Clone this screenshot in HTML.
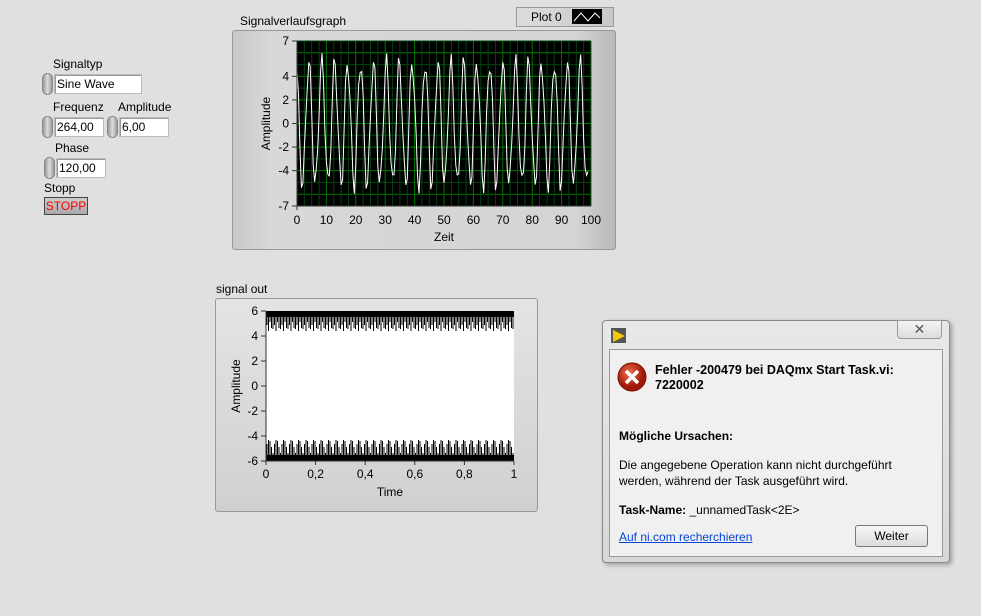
<!DOCTYPE html>
<html><head><meta charset="utf-8"><style>
body{margin:0;width:981px;height:616px;background:#e0e0e0;font-family:"Liberation Sans",sans-serif;font-size:12px;position:relative;overflow:hidden;color:#000}
.a{position:absolute}
.lbl{position:absolute;font-size:12px}
.inp{position:absolute;background:#fff;border:1px solid #bbb;box-shadow:inset 1px 1px 0 #999;height:20px;line-height:19px;padding-left:2px;font-size:12px;box-sizing:border-box}
.spin{position:absolute;width:11px;height:22px;border-radius:6px;background:linear-gradient(90deg,#999,#ddd,#999);border:1px solid #888;box-sizing:border-box}
.panel{position:absolute;background:linear-gradient(90deg,#c8c8c8,#d8d8d8 10%,#d4d4d4 90%,#b8b8b8);border:1px solid #999;border-radius:3px}
</style></head><body>
<div class="lbl" style="left:53px;top:57px">Signaltyp</div>
<div class="spin" style="left:42px;top:73px"></div>
<div class="inp" style="left:54px;top:74px;width:88px">Sine Wave</div>
<div class="lbl" style="left:53px;top:100px">Frequenz</div>
<div class="lbl" style="left:118px;top:100px">Amplitude</div>
<div class="spin" style="left:42px;top:116px"></div>
<div class="inp" style="left:54px;top:117px;width:50px">264,00</div>
<div class="spin" style="left:107px;top:116px"></div>
<div class="inp" style="left:119px;top:117px;width:50px">6,00</div>
<div class="lbl" style="left:55px;top:141px">Phase</div>
<div class="spin" style="left:44px;top:157px"></div>
<div class="inp" style="left:56px;top:158px;width:50px">120,00</div>
<div class="lbl" style="left:44px;top:181px">Stopp</div>
<div class="a" style="left:44px;top:197px;width:44px;height:18px;background:linear-gradient(#ccc,#aaa);border:1px solid #444;color:#f00;text-align:center;line-height:17px;box-sizing:border-box">STOPP</div>

<div class="lbl" style="left:240px;top:14px">Signalverlaufsgraph</div>
<div class="a" style="left:516px;top:7px;width:98px;height:20px;background:linear-gradient(90deg,#ddd,#c8c8c8);border:1px solid #999;box-sizing:border-box"></div>
<div class="lbl" style="left:531px;top:10px">Plot 0</div>
<svg class="a" style="left:572px;top:9px" width="30" height="15"><rect width="30" height="15" fill="#000"/><polyline points="2,12 9,4 16,12 23,4 28,9" fill="none" stroke="#fff"/></svg>
<div class="panel" style="left:232px;top:30px;width:382px;height:218px"></div>
<svg id="g1" class="a" style="left:232px;top:30px" width="382" height="218" font-family="Liberation Sans" font-size="12"></svg>

<div class="lbl" style="left:216px;top:282px">signal out</div>
<div class="panel" style="left:215px;top:298px;width:321px;height:212px;background:linear-gradient(#e4e4e4,#d0d0d0)"></div>
<svg id="g2" class="a" style="left:215px;top:298px" width="322" height="212" font-family="Liberation Sans" font-size="12"></svg>

<div class="a" style="left:602px;top:320px;width:348px;height:243px;background:linear-gradient(#e8e8e8,#d8d8d8);border:1px solid #888;border-radius:4px;box-sizing:border-box;box-shadow:2px 2px 5px rgba(0,0,0,.3)"></div>
<div class="a" style="left:611px;top:328px;width:15px;height:15px;background:#555"></div>
<svg class="a" style="left:612px;top:329px" width="14" height="14"><polygon points="1,1 13,7 1,13" fill="#f5c800"/></svg>
<div class="a" style="left:897px;top:320px;width:45px;height:19px;border:1px solid #999;border-radius:0 0 4px 4px;background:linear-gradient(#f4f4f4,#ddd);box-sizing:border-box;text-align:center;color:#555;font-size:14px;line-height:17px">✕</div>
<div class="a" style="left:609px;top:349px;width:334px;height:208px;background:#f0f0f0;border:1px solid #999;box-sizing:border-box"></div>
<svg class="a" style="left:617px;top:362px" width="32" height="32"><defs><radialGradient id="rg" cx=".4" cy=".35"><stop offset="0" stop-color="#f07050"/><stop offset="1" stop-color="#a01808"/></radialGradient></defs><circle cx="15" cy="15" r="14" fill="url(#rg)" stroke="#801000"/><path d="M9 9L21 21M21 9L9 21" stroke="#fff" stroke-width="3.5"/></svg>
<div class="a" style="left:655px;top:363px;font-weight:bold;font-size:12.5px;line-height:15px">Fehler -200479 bei DAQmx Start Task.vi:<br>7220002</div>
<div class="a" style="left:619px;top:429px;font-weight:bold">Mögliche Ursachen:</div>
<div class="a" style="left:619px;top:458px;line-height:15.5px">Die angegebene Operation kann nicht durchgeführt<br>werden, während der Task ausgeführt wird.</div>
<div class="a" style="left:619px;top:503px"><b>Task-Name:</b> _unnamedTask&lt;2E&gt;</div>
<div class="a" style="left:619px;top:530px;color:#0645d8;text-decoration:underline">Auf ni.com recherchieren</div>
<div class="a" style="left:855px;top:525px;width:73px;height:22px;border:1px solid #777;border-radius:3px;background:linear-gradient(#f6f6f6,#ddd);box-sizing:border-box;text-align:center;line-height:20px">Weiter</div>

<script>
(function(){
var s='';var L=65,R=359,T=11,B=176;
s+='<rect x="'+L+'" y="'+T+'" width="'+(R-L)+'" height="'+(B-T)+'" fill="#000"/>';
var yv=function(v){return T+(7-v)*(B-T)/14};var xv=function(v){return L+v*(R-L)/100};
for(var v=-7;v<=7;v+=1){s+='<line x1="'+L+'" x2="'+R+'" y1="'+yv(v)+'" y2="'+yv(v)+'" stroke="'+(v%2==0?'#070':'#041')+'"/>';}
for(var v=0;v<=100;v+=2.5){s+='<line y1="'+T+'" y2="'+B+'" x1="'+xv(v)+'" x2="'+xv(v)+'" stroke="'+(v%10==0?'#070':'#041')+'"/>';}
var p=[];for(var i=0;i<=99;i+=0.5){var y=5.2*Math.sin(2*Math.PI*0.2275*i+2.1)+0.8*Math.sin(2*Math.PI*0.5*i);p.push(xv(i).toFixed(1)+','+yv(y).toFixed(1));}
s+='<polyline points="'+p.join(' ')+'" fill="none" stroke="#fff"/>';
s+='<line x1="'+L+'" x2="'+L+'" y1="'+T+'" y2="'+(B+4)+'" stroke="#333"/><line x1="'+(L-4)+'" x2="'+R+'" y1="'+B+'" y2="'+B+'" stroke="#333"/>';
[7,4,2,0,-2,-4,-7].forEach(function(v){s+='<text x="'+(L-8)+'" y="'+(yv(v)+4)+'" text-anchor="end">'+v+'</text><line x1="'+(L-5)+'" x2="'+L+'" y1="'+yv(v)+'" y2="'+yv(v)+'" stroke="#333"/>';});
for(var v=0;v<=100;v+=10){s+='<text x="'+xv(v)+'" y="'+(B+18)+'" text-anchor="middle">'+v+'</text>';}
s+='<text x="'+((L+R)/2)+'" y="'+(B+35)+'" text-anchor="middle">Zeit</text>';
s+='<text transform="translate(38,'+((T+B)/2)+') rotate(-90)" text-anchor="middle">Amplitude</text>';
document.getElementById('g1').innerHTML=s;
s='';L=51;R=299;T=13;B=163;
yv=function(v){return T+(6-v)*(B-T)/12};xv=function(v){return L+v*(R-L)};
s+='<rect x="'+L+'" y="'+T+'" width="'+(R-L)+'" height="'+(B-T)+'" fill="#fff"/>';
s+='<rect x="'+L+'" y="'+T+'" width="'+(R-L)+'" height="6" fill="#000"/><rect x="'+L+'" y="'+(B-6)+'" width="'+(R-L)+'" height="6" fill="#000"/>';
for(var x=L+1;x<R;x+=1.5){var k=Math.round((x-L)/1.5);var h1=8+((k*7)%5)*3+(k%5==0?10:0);var h2=8+((k*3)%5)*3+(k%5==2?10:0);
s+='<line x1="'+x+'" x2="'+x+'" y1="'+T+'" y2="'+(T+h1)+'" stroke="#000"/><line x1="'+x+'" x2="'+x+'" y1="'+B+'" y2="'+(B-h2)+'" stroke="#000"/>';}
s+='<line x1="'+L+'" x2="'+L+'" y1="'+T+'" y2="'+(B+4)+'" stroke="#333"/><line x1="'+(L-4)+'" x2="'+R+'" y1="'+B+'" y2="'+B+'" stroke="#333"/>';
[6,4,2,0,-2,-4,-6].forEach(function(v){s+='<text x="'+(L-8)+'" y="'+(yv(v)+4)+'" text-anchor="end">'+v+'</text><line x1="'+(L-5)+'" x2="'+L+'" y1="'+yv(v)+'" y2="'+yv(v)+'" stroke="#333"/>';});
['0','0,2','0,4','0,6','0,8','1'].forEach(function(t,i){s+='<text x="'+xv(i*0.2)+'" y="'+(B+17)+'" text-anchor="middle">'+t+'</text><line x1="'+xv(i*0.2)+'" x2="'+xv(i*0.2)+'" y1="'+B+'" y2="'+(B+4)+'" stroke="#333"/>';});
s+='<text x="'+((L+R)/2)+'" y="'+(B+35)+'" text-anchor="middle">Time</text>';
s+='<text transform="translate(25,'+((T+B)/2)+') rotate(-90)" text-anchor="middle">Amplitude</text>';
document.getElementById('g2').innerHTML=s;
})();
</script>
</body></html>
